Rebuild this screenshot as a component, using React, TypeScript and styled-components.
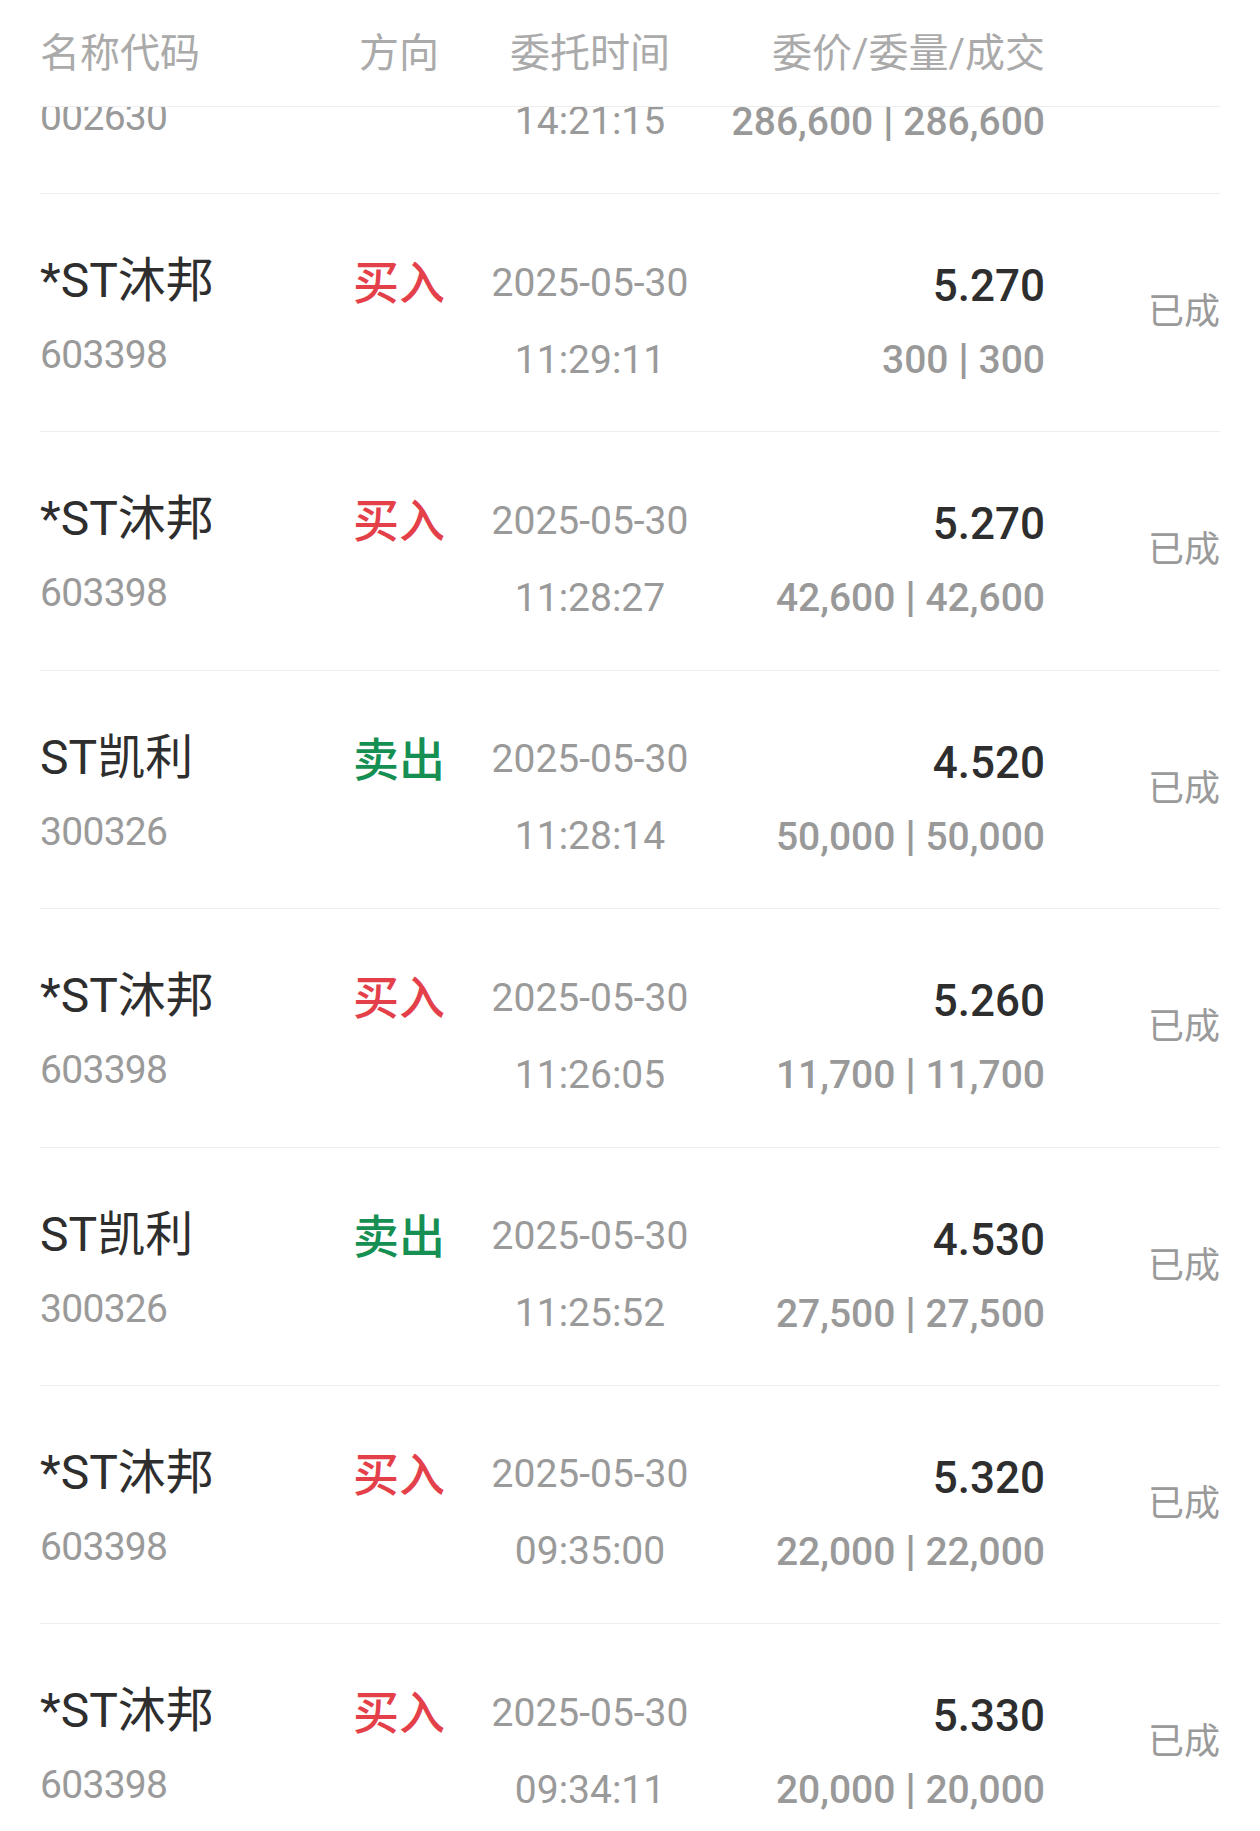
import React from "react";
import styled, { createGlobalStyle } from "styled-components";

const GlobalStyle = createGlobalStyle`
  html, body {
    margin: 0;
    padding: 0;
    background: #ffffff;
  }
  body {
    font-family: Roboto, "Noto Sans CJK SC", sans-serif;
    -webkit-font-smoothing: antialiased;
  }
`;

const COLUMNS = "278px 162px 220px 345px 175px";

type Align = "flex-start" | "center" | "flex-end";

const Page = styled.div`
  width: 1260px;
  height: 1831px;
  box-sizing: border-box;
  padding: 0 40px;
  overflow: hidden;
  display: flex;
  flex-direction: column;
  background: #ffffff;
`;

const Header = styled.div`
  display: grid;
  grid-template-columns: ${COLUMNS};
  height: 107px;
  box-sizing: border-box;
  padding-top: 29px;
  border-bottom: 1px solid #eeeeee;
  flex-shrink: 0;
`;

const HeaderCell = styled.div<{ $align: Align }>`
  display: flex;
  justify-content: ${(p) => p.$align};
  font-family: Roboto, "Noto Sans CJK SC", sans-serif;
  font-size: 40px;
  line-height: 50px;
  color: #aaaaaa;
  white-space: nowrap;
`;

const Viewport = styled.div`
  flex: 1;
  min-height: 0;
  overflow: hidden;
`;

const List = styled.div`
  margin-top: -151.4px;
`;

const Row = styled.div`
  display: grid;
  grid-template-columns: ${COLUMNS};
  height: 238.4px;
  box-sizing: border-box;
  border-bottom: 1px solid #eeeeee;
`;

const Cell = styled.div<{ $align: Align; $top: number; $gap?: number }>`
  display: flex;
  flex-direction: column;
  align-items: ${(p) => p.$align};
  padding-top: ${(p) => p.$top}px;
  gap: ${(p) => p.$gap ?? 0}px;
  white-space: nowrap;
`;

const StockName = styled.div`
  font-family: Roboto, "Noto Sans CJK SC", sans-serif;
  font-size: 48px;
  line-height: 50px;
  height: 50px;
  color: #2e2e2e;
`;

const StockCode = styled.div`
  font-family: Roboto, sans-serif;
  font-size: 39px;
  letter-spacing: -0.7px;
  line-height: 50px;
  height: 50px;
  color: #9a9a9a;
`;

const Direction = styled.div<{ $side: "buy" | "sell" }>`
  font-family: "Noto Sans CJK SC", sans-serif;
  font-size: 46px;
  font-weight: 500;
  line-height: 50px;
  height: 50px;
  color: ${(p) => (p.$side === "buy" ? "#e4404a" : "#168f53")};
`;

const DateText = styled.div`
  font-family: Roboto, sans-serif;
  font-size: 39px;
  line-height: 50px;
  height: 50px;
  color: #9a9a9a;
`;

const Price = styled.div`
  font-family: Roboto, sans-serif;
  font-size: 44px;
  font-weight: 500;
  line-height: 50px;
  height: 50px;
  color: #2e2e2e;
`;

const Volume = styled.div`
  font-family: Roboto, sans-serif;
  font-size: 39px;
  font-weight: 500;
  line-height: 50px;
  height: 50px;
  color: #999999;
`;

const Bar = styled.span`
  font-weight: 700;
  font-size: 42px;
`;

const Status = styled.div`
  font-family: "Noto Sans CJK SC", sans-serif;
  font-size: 36px;
  line-height: 50px;
  height: 50px;
  color: #9a9a9a;
`;

type Order = {
  name?: string;
  code: string;
  side?: "buy" | "sell";
  date?: string;
  time: string;
  price?: string;
  ordered: string;
  filled: string;
  status?: string;
};

const orders: Order[] = [
  { code: "002630", time: "14:21:15", ordered: "286,600", filled: "286,600" },
  { name: "*ST沐邦", code: "603398", side: "buy", date: "2025-05-30", time: "11:29:11", price: "5.270", ordered: "300", filled: "300", status: "已成" },
  { name: "*ST沐邦", code: "603398", side: "buy", date: "2025-05-30", time: "11:28:27", price: "5.270", ordered: "42,600", filled: "42,600", status: "已成" },
  { name: "ST凯利", code: "300326", side: "sell", date: "2025-05-30", time: "11:28:14", price: "4.520", ordered: "50,000", filled: "50,000", status: "已成" },
  { name: "*ST沐邦", code: "603398", side: "buy", date: "2025-05-30", time: "11:26:05", price: "5.260", ordered: "11,700", filled: "11,700", status: "已成" },
  { name: "ST凯利", code: "300326", side: "sell", date: "2025-05-30", time: "11:25:52", price: "4.530", ordered: "27,500", filled: "27,500", status: "已成" },
  { name: "*ST沐邦", code: "603398", side: "buy", date: "2025-05-30", time: "09:35:00", price: "5.320", ordered: "22,000", filled: "22,000", status: "已成" },
  { name: "*ST沐邦", code: "603398", side: "buy", date: "2025-05-30", time: "09:34:11", price: "5.330", ordered: "20,000", filled: "20,000", status: "已成" },
];

export default function App() {
  return (
    <>
      <GlobalStyle />
      <Page>
        <Header>
          <HeaderCell $align="flex-start">名称代码</HeaderCell>
          <HeaderCell $align="center">方向</HeaderCell>
          <HeaderCell $align="center">委托时间</HeaderCell>
          <HeaderCell $align="flex-end">委价/委量/成交</HeaderCell>
          <HeaderCell $align="flex-end" />
        </Header>
        <Viewport>
          <List>
            {orders.map((o, i) => (
              <Row key={i}>
                <Cell $align="flex-start" $top={62} $gap={24}>
                  <StockName>{o.name}</StockName>
                  <StockCode>{o.code}</StockCode>
                </Cell>
                <Cell $align="center" $top={60}>
                  {o.side && (
                    <Direction $side={o.side}>{o.side === "buy" ? "买入" : "卖出"}</Direction>
                  )}
                </Cell>
                <Cell $align="center" $top={63.5} $gap={27}>
                  <DateText>{o.date}</DateText>
                  <DateText>{o.time}</DateText>
                </Cell>
                <Cell $align="flex-end" $top={67} $gap={23}>
                  <Price>{o.price}</Price>
                  <Volume>
                    {o.ordered} <Bar>|</Bar> {o.filled}
                  </Volume>
                </Cell>
                <Cell $align="flex-end" $top={89}>
                  {o.status && <Status>{o.status}</Status>}
                </Cell>
              </Row>
            ))}
          </List>
        </Viewport>
      </Page>
    </>
  );
}
